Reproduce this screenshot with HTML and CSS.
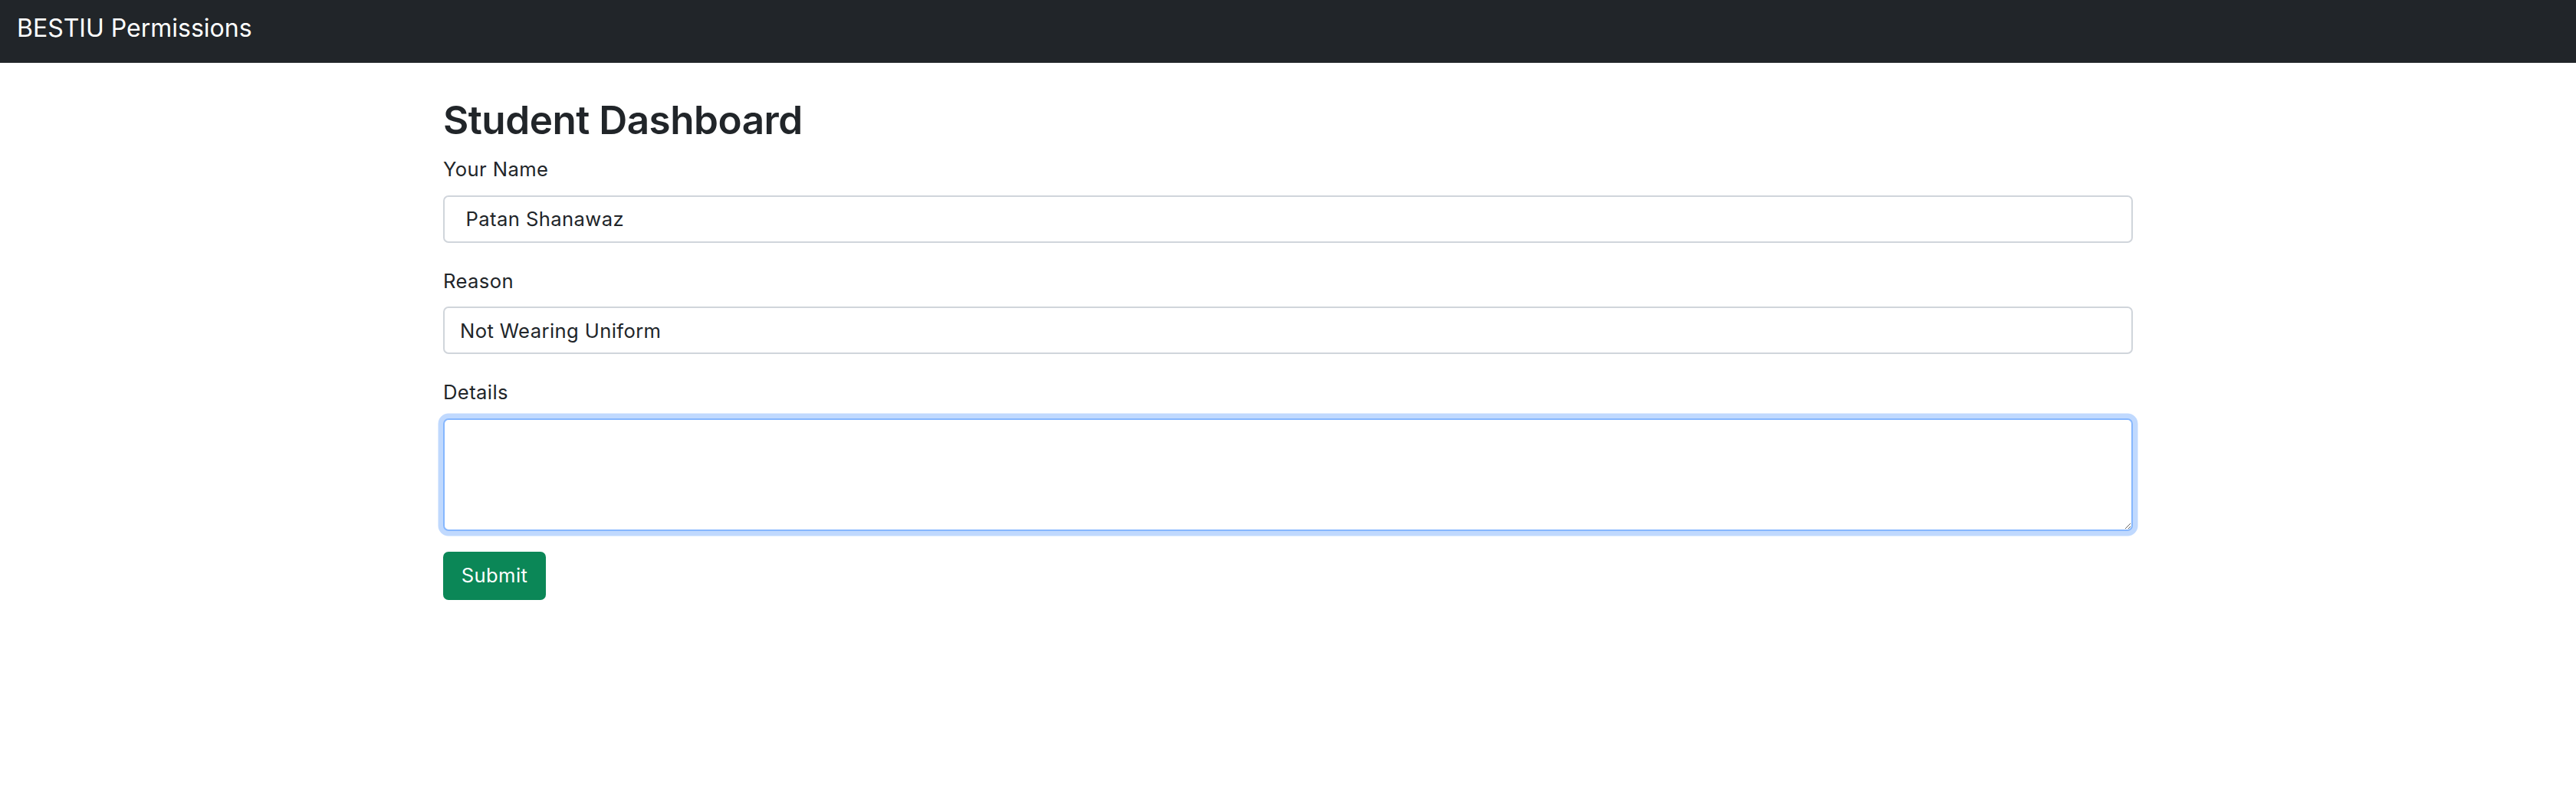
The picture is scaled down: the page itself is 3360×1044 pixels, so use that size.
FILE: index.html
```html
<!DOCTYPE html>
<html lang="en">
<head>
<meta charset="utf-8">
<title>BESTIU Permissions</title>
<link rel="stylesheet" href="styles.css">
</head>
<body>
<nav class="navbar">
  <span class="brand">BESTIU Permissions</span>
</nav>
<main class="container">
  <h2 class="title">Student Dashboard</h2>
  <form class="form">
    <div class="field">
      <label class="label" for="name">Your Name</label>
      <input class="control" id="name" type="text" value=" Patan Shanawaz">
    </div>
    <div class="field">
      <label class="label" for="reason">Reason</label>
      <input class="control" id="reason" type="text" value="Not Wearing Uniform">
    </div>
    <div class="field field-last">
      <label class="label" for="details">Details</label>
      <textarea class="control area focused" id="details" rows="3"></textarea>
    </div>
    <button class="btn" type="button">Submit</button>
  </form>
</main>
</body>
</html>
```

FILE: styles.css
```css
* { box-sizing: border-box; }
html, body { margin: 0; padding: 0; }
body {
  font-family: Inter, "Liberation Sans", Arial, sans-serif;
  font-size: 25.6px;
  line-height: 1.5;
  letter-spacing: 0.4px;
  color: #212529;
  background: #fff;
}
.navbar {
  height: 82px;
  background: #212529;
  display: flex;
  align-items: center;
  padding: 0 22px;
}
.brand {
  color: #fff;
  font-size: 32px;
  line-height: 1.2;
  letter-spacing: 0;
  margin-top: -8px;
}
.container {
  width: 2204px;
  margin: 0 auto;
}
.title {
  font-size: 51.2px;
  font-weight: 600;
  letter-spacing: -0.5px;
  line-height: 1.2;
  margin: 44px 0 15px;
}
.form { display: flex; flex-direction: column; }
.field { display: flex; flex-direction: column; margin-bottom: 31px; }
.field-last { margin-bottom: 27px; }
.label { margin-bottom: 14px; }
.control {
  font: inherit;
  letter-spacing: inherit;
  color: #212529;
  width: 100%;
  height: 62px;
  padding: 0 20px;
  border: 2px solid #d0d5db;
  border-radius: 7px;
  background: #fff;
  outline: none;
}
.area {
  height: 147px;
  resize: vertical;
}
.focused {
  border-color: #86b7fe;
  box-shadow: 0 0 0 6.5px rgba(13, 110, 253, 0.26);
}
.btn {
  align-self: flex-start;
  font: inherit;
  letter-spacing: inherit;
  color: #fff;
  background: #0b8757;
  border: 0;
  border-radius: 7px;
  width: 134px;
  height: 63px;
  padding: 0;
}
```
